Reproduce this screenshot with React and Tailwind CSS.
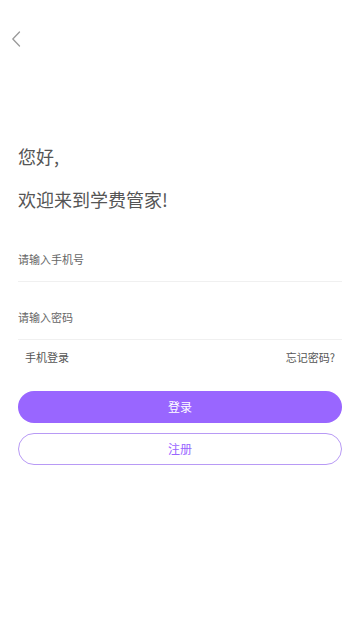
import { useState } from 'react';

export default function App() {
  const [phone, setPhone] = useState('');
  const [password, setPassword] = useState('');

  return (
    <div
      className="min-h-[640px] w-full bg-white"
      style={{ fontFamily: '"Noto Sans CJK SC", "Noto Sans", sans-serif' }}
    >
      {/* 返回 */}
      <div className="pt-[31px] pl-[11px]">
        <svg width="10" height="16" viewBox="0 0 10 16" fill="none">
          <path d="M8.5 1 L1.8 8 L8.5 15" stroke="#9a9a9a" strokeWidth="1.3" strokeLinecap="round" strokeLinejoin="round" />
        </svg>
      </div>

      <div className="px-[18px]">
        {/* 标题 */}
        <div className="mt-[97px] text-[18px] leading-[24px] text-[#555]">您好,</div>
        <div className="mt-[19px] text-[18px] leading-[24px] text-[#555]">欢迎来到学费管家!</div>

        {/* 输入框 */}
        <div className="mt-[27px] h-[44px] flex items-center border-b border-[#f0f0f0]">
          <input
            value={phone}
            onChange={(e) => setPhone(e.target.value)}
            placeholder="请输入手机号"
            className="w-full bg-transparent text-[11px] text-[#333] placeholder:text-[#666] outline-none"
          />
        </div>
        <div className="mt-[14px] h-[44px] flex items-center border-b border-[#f0f0f0]">
          <input
            type="password"
            value={password}
            onChange={(e) => setPassword(e.target.value)}
            placeholder="请输入密码"
            className="w-full bg-transparent text-[11px] text-[#333] placeholder:text-[#666] outline-none"
          />
        </div>

        <div className="mt-[7px] px-[7px] h-[20px] flex items-center justify-between text-[11px] text-[#555]">
          <span>手机登录</span>
          <span>忘记密码?</span>
        </div>

        {/* 按钮 */}
        <button className="mt-[24px] w-full h-[32px] rounded-full bg-[#9966ff] text-white text-[12px]">
          登录
        </button>
        <button className="mt-[10px] w-full h-[32px] rounded-full border border-[#b89af5] bg-white text-[#9966ff] text-[12px]">
          注册
        </button>
      </div>
    </div>
  );
}
